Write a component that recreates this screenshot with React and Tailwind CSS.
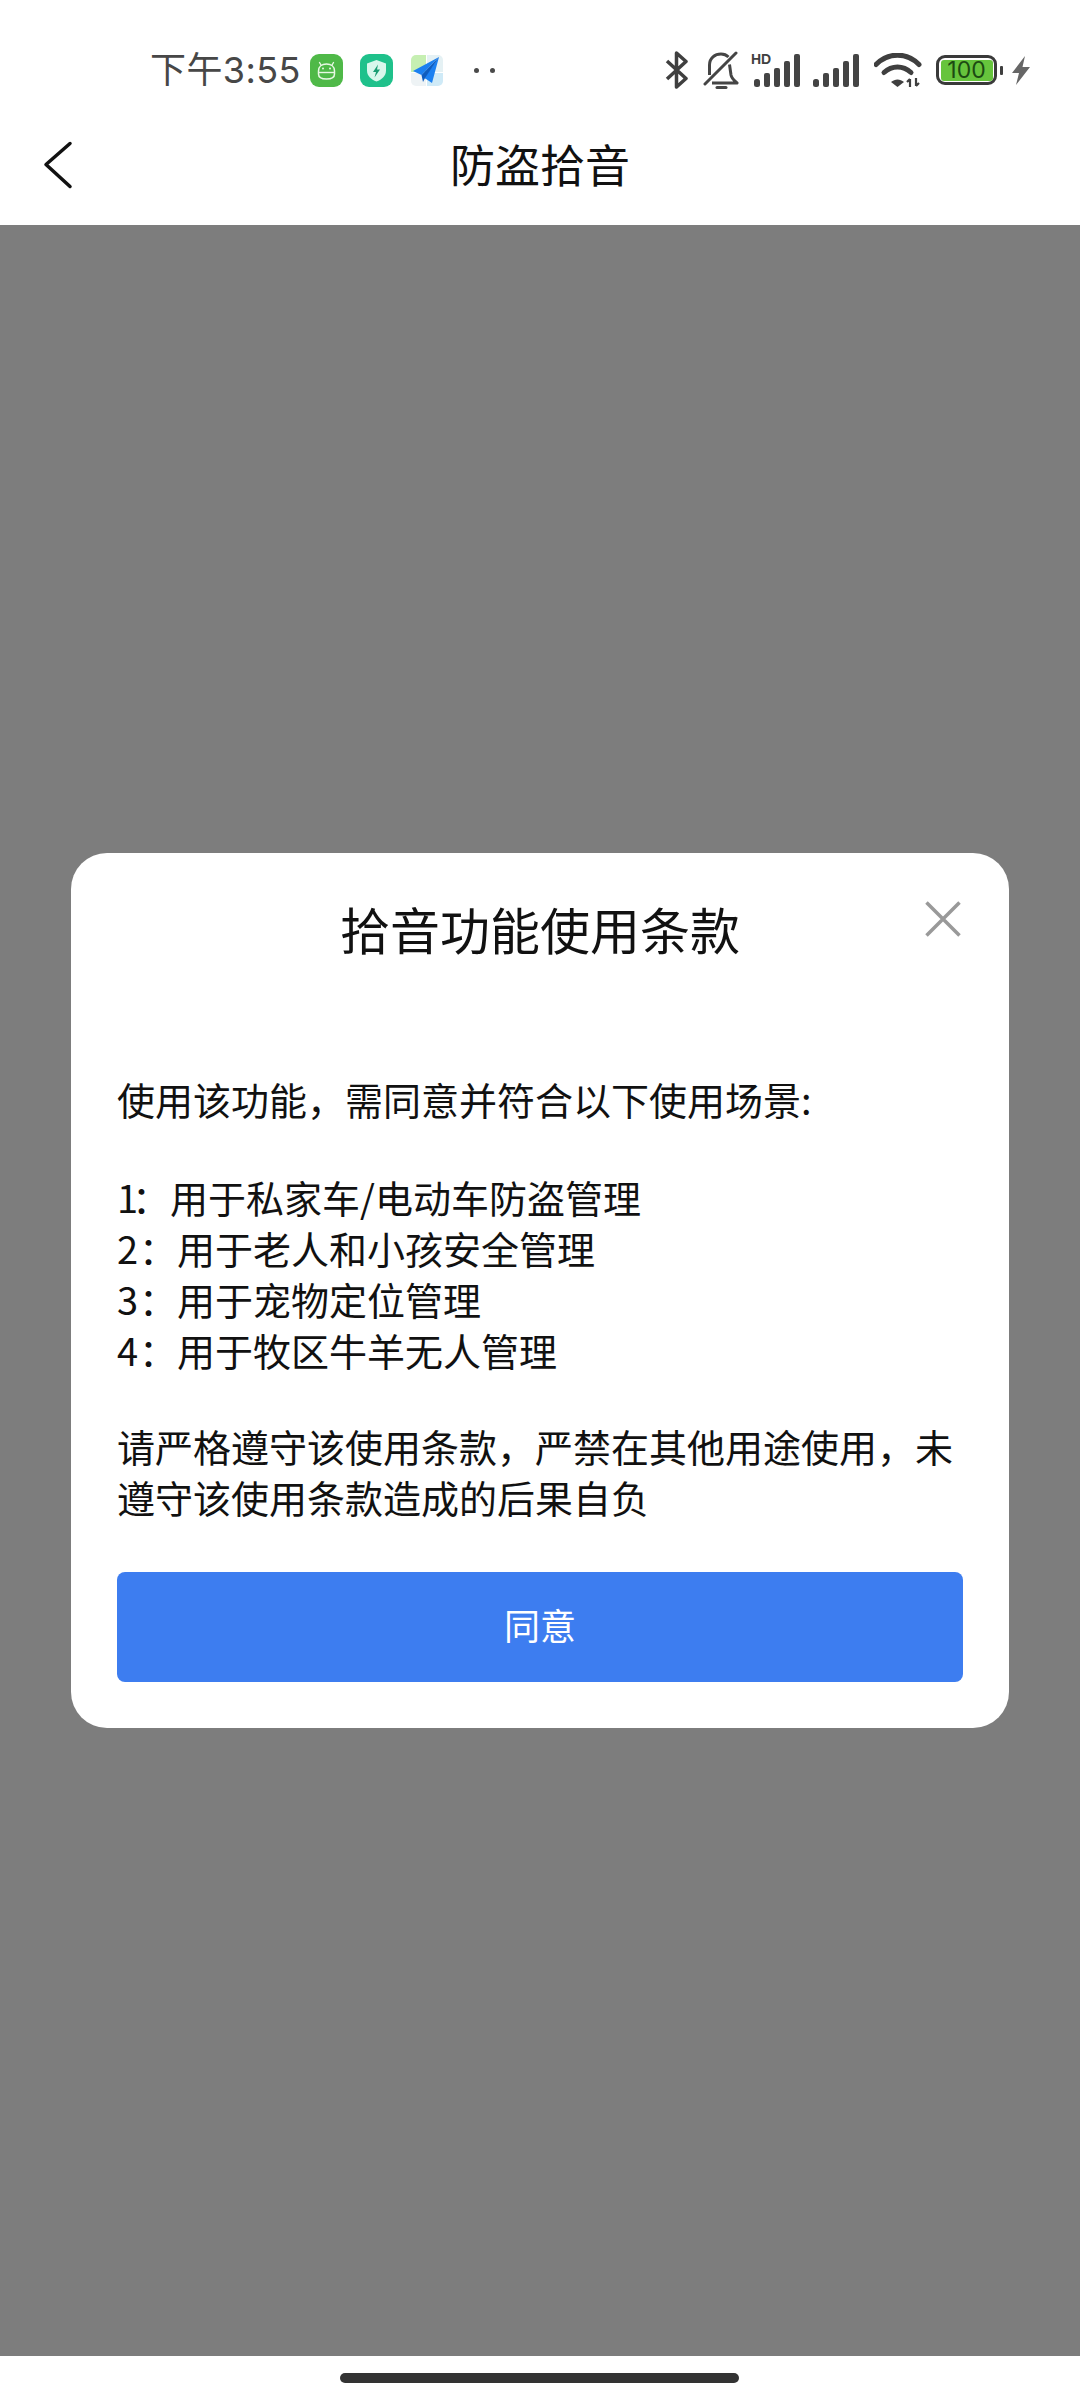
function MiuiStatus() {
  return (
    <div className="h-[102px] pt-[38px] pl-[150px] pr-[50px] flex items-center bg-white">
      <span className="w-[152px] text-[36px] leading-none tracking-[0.4px] text-[#474747] whitespace-nowrap font-['Inter','Noto_Sans_CJK_SC',sans-serif]">
        下午3:55
      </span>

      {/* notification icons */}
      <svg width="33" height="33" viewBox="0 0 33 33" className="ml-[8px]">
        <rect width="33" height="33" rx="9" fill="#4fb948" />
        <path d="M11 11 9.500 8.500M22 11l1.500-2.500" stroke="#e8f8e4" strokeWidth="1.400" fill="none" strokeLinecap="round" />
        <path d="M8.500 17c0-4.500 3.500-7 8-7s8 2.500 8 7v3c0 3-3 5-8 5s-8-2-8-5z" stroke="#e8f8e4" strokeWidth="1.500" fill="none" />
        <path d="M8.500 18.500h16" stroke="#e8f8e4" strokeWidth="1.400" />
        <circle cx="13" cy="14.500" r="1" fill="#e8f8e4" />
        <circle cx="20" cy="14.500" r="1" fill="#e8f8e4" />
      </svg>
      <svg width="33" height="33" viewBox="0 0 33 33" className="ml-[17px]">
        <rect width="33" height="33" rx="9" fill="#1fc18b" />
        <path d="M16.500 6 26 9.500v7c0 5.500-4 9-9.500 11C11 25.500 7 22 7 16.500v-7z" fill="#d9f7ec" />
        <path d="M18 10.500 13 18h3l-1.500 5.500L20 15.500h-3z" fill="#1a9c72" />
      </svg>
      <svg width="34" height="33" viewBox="0 0 34 33" className="ml-[17px]">
        <path d="M1 6a5 5 0 0 1 5-5h10v17H1z" fill="#c6efb2" />
        <path d="M17 1h11a5 5 0 0 1 5 5v12H17z" fill="#e5f1f4" />
        <path d="M1 19h15v13H6a5 5 0 0 1-5-5z" fill="#eef3f5" />
        <path d="M17 19h16v8a5 5 0 0 1-5 5H17z" fill="#cfeaf7" />
        <path d="M29 3 3 17l8.500 4L29 3 14 24l2 1 6 4z" fill="#1b80f1" />
        <path d="M29 3 11.500 21l1.500 7 2-4z" fill="#0e5cbf" />
      </svg>
      <div className="ml-[30px] flex gap-[11px]">
        <div className="w-[5px] h-[5px] rounded-full bg-[#4a4a4a]" />
        <div className="w-[5px] h-[5px] rounded-full bg-[#4a4a4a]" />
      </div>

      {/* system icons */}
      <svg width="24" height="38" viewBox="0 0 24 38" fill="none" stroke="#3f3f3f" strokeWidth="3.500" className="ml-[170px]">
        <path d="M2 10 21 27.500 11.500 36V2L21 10.500 2 28" strokeLinejoin="round" />
      </svg>
      <svg width="36" height="38" viewBox="0 0 36 38" fill="none" stroke="#454545" strokeWidth="3" className="ml-[14px]">
        <path d="M6.500 24V14C6.500 7 12 3 18 3c3 0 5.500 1 7.500 3" />
        <path d="M26.500 13.500 28 24c.5 3 3 5.500 6 8H9" strokeLinejoin="round" />
        <path d="M33 2 2 33" strokeLinecap="round" />
        <path d="M14 36.500h9" strokeLinecap="round" />
      </svg>
      <SignalBars hd />
      <SignalBars className="ml-[11px]" />
      <svg width="48" height="35" viewBox="0 0 48 35" fill="none" className="ml-[14px]">
        <path d="M2 11.500C14-1 33-1 45 11.500" stroke="#3f3f3f" strokeWidth="5" strokeLinecap="round" />
        <path d="M10 19.500c8-7.500 19-7.500 27 0" stroke="#3f3f3f" strokeWidth="5" strokeLinecap="round" />
        <path d="M17 29c4-3.500 9-3.500 13 0l-6.500 5z" fill="#3f3f3f" />
        <path d="M36 34v-8m-3 3 3-3M42 25v8m3-3-3 3" stroke="#3f3f3f" strokeWidth="2.200" />
      </svg>
      <div className="ml-[14px] w-[61px] h-[30px] shrink-0 rounded-[9px] border-[3.500px] border-[#3a3a3a] p-[1.500px]">
        <div className="h-full rounded-[3px] bg-[#66c43c] flex items-center justify-center text-[23px] leading-none text-[#1c4a12] font-['Inter',sans-serif]">
          100
        </div>
      </div>
      <div className="ml-[3px] w-[3px] h-[9px] rounded-[1px] bg-[#3f3f3f]" />
      <svg width="18" height="29" viewBox="0 0 18 29" className="ml-[9px] shrink-0">
        <path d="M13 0 0 17h7l-3 12L18 11h-7.500z" fill="#666666" />
      </svg>
    </div>
  );
}

function SignalBars({ hd, className = "ml-[14px]" }) {
  return (
    <div className={`relative w-[48px] h-[34px] shrink-0 ${className}`}>
      {hd && (
        <span className="absolute -left-[2px] -top-[1px] text-[14px] leading-none font-bold text-[#3f3f3f] font-['Liberation_Sans',sans-serif]">
          HD
        </span>
      )}
      <svg width="48" height="34" viewBox="0 0 48 34" fill="#444444">
        <rect x="1" y="26" width="6" height="8" rx="2.500" />
        <rect x="11" y="20" width="6" height="14" rx="2" />
        <rect x="21" y="15" width="6" height="19" rx="2" />
        <rect x="31" y="8" width="6" height="26" rx="2" />
        <rect x="41" y="1" width="6" height="33" rx="2" />
      </svg>
    </div>
  );
}

function TermsDialog() {
  return (
    <div className="relative w-[938px] rounded-[36px] bg-white px-[46px] pt-[45px] pb-[46px] text-[#111111]">
      <h2 className="text-center text-[50px] leading-[60px] font-normal">拾音功能使用条款</h2>
      <svg width="36" height="36" viewBox="0 0 36 36" fill="none" stroke="#999999" strokeWidth="3.500" className="absolute right-[48px] top-[48px]">
        <path d="M1.500 1.500 34.500 34.500M34.500 1.500 1.500 34.500" />
      </svg>

      <div className="text-[38px] leading-[51px]">
        <p className="mt-[115px]">使用该功能，需同意并符合以下使用场景:</p>
        <ul className="mt-[47px]">
          <li><span className="tracking-[-6px]">1</span>：用于私家车/电动车防盗管理</li>
          <li><span className="pr-[1px]">2</span>：用于老人和小孩安全管理</li>
          <li><span className="pr-[1px]">3</span>：用于宠物定位管理</li>
          <li><span className="pr-[1px]">4</span>：用于牧区牛羊无人管理</li>
        </ul>
        <p className="mt-[45px]">请严格遵守该使用条款，严禁在其他用途使用，未遵守该使用条款造成的后果自负</p>
      </div>

      <button className="mt-[50px] w-full h-[110px] pb-[6px] rounded-[8px] bg-[#3d7df0] text-white text-[36px]">同意</button>
    </div>
  );
}

export default function App() {
  return (
    <div className="w-[1080px] h-[2400px] flex flex-col bg-white font-['Noto_Sans_CJK_SC',sans-serif]">
      <MiuiStatus />

      {/* Nav */}
      <div className="relative h-[123px] shrink-0 flex items-center justify-center bg-white">
        <svg width="30" height="48" viewBox="0 0 30 48" fill="none" stroke="#111111" strokeWidth="3.500" strokeLinecap="round" strokeLinejoin="round" className="absolute left-[43px] top-[39px]">
          <path d="M27 2.500 3 23.500 27 45.500" />
        </svg>
        <h1 className="text-[45px] leading-none font-normal text-[#111111]">防盗拾音</h1>
      </div>

      {/* Overlay */}
      <div className="flex-1 flex items-center justify-center bg-[#7d7d7d]">
        <TermsDialog />
      </div>

      {/* Gesture bar */}
      <div className="h-[44px] shrink-0 flex items-center justify-center bg-white">
        <div className="w-[399px] h-[10px] mr-[1px] rounded-full bg-[#333333]" />
      </div>
    </div>
  );
}
